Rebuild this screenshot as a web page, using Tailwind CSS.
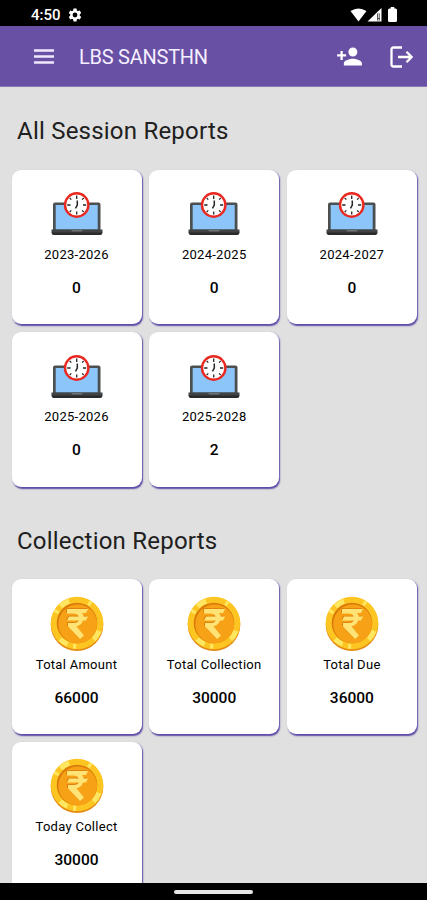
<!DOCTYPE html>
<html lang="en">
<head>
<meta charset="utf-8">
<meta name="viewport" content="width=device-width, initial-scale=1">
<title>LBS SANSTHN</title>
<script src="https://cdn.jsdelivr.net/npm/@tailwindcss/browser@4"></script>
</head>
<body class="bg-black font-[Roboto,sans-serif]">
<svg class="hidden">
  <symbol id="laptop" viewBox="0 0 54 46">
    <rect x="3" y="11.5" width="47.500" height="30" rx="2" fill="#4b4f50"/>
    <rect x="5.700" y="14" width="42" height="24.500" fill="#8cc5fa"/>
    <path d="M1.500 38.500H52.500V41Q52.500 44 49.500 44H4.500Q1.500 44 1.500 41Z" fill="#414345"/>
    <path d="M1.500 41.500H52.500Q52 44 49.500 44H4.500Q2 44 1.500 41.500Z" fill="#292b2d"/>
    <path d="M21 39H33L31.500 40.500H22.500Z" fill="#707375"/>
    <circle cx="26.700" cy="14" r="11.700" fill="#fff" stroke="#e9281f" stroke-width="2.400"/>
    <g stroke="#252525" stroke-width="1.300">
      <path d="M26.700 4.500V8M26.700 20.500V23.500M17.200 14H20.500M33 14H36.200"/>
      <path stroke-width="1.200" d="M19.700 7L21.300 8.600M32.100 19.400L33.700 21M19.700 21L21.300 19.400M32.100 8.600L33.700 7"/>
      <path stroke-width="1.500" fill="none" d="M27.300 9.500V14L25.500 17.300"/>
    </g>
  </symbol>
  <symbol id="coin" viewBox="0 0 54 56">
    <circle cx="27" cy="28.700" r="26.300" fill="#e58a13"/>
    <circle cx="27" cy="27" r="26.300" fill="#fcc521"/>
    <circle cx="27" cy="27" r="23.300" fill="none" stroke="#ffe762" stroke-width="5" stroke-dasharray="10 19 3 6 9 28 3 5 10 20 3 30.400" transform="rotate(20 27 27)"/>
    <circle cx="27" cy="27" r="20.300" fill="#d97a0b"/>
    <circle cx="27.700" cy="28" r="19.400" fill="#f6a116"/>
    <path d="M17 13H38L36 17H32Q33.500 18.500 33.700 20.500H38L36 24.500H33Q31.700 29 26.500 30.300L34 39.500L30 43L18 30.500V27H23.500Q27.500 27 28.700 24.500H17L19 20.500H28.700Q27.500 17.500 23.500 17.500H17Z" fill="#d97a0b" transform="translate(-.8 -.8)"/>
    <path d="M17 13H38L36 17H32Q33.500 18.500 33.700 20.500H38L36 24.500H33Q31.700 29 26.500 30.300L34 39.500L30 43L18 30.500V27H23.500Q27.500 27 28.700 24.500H17L19 20.500H28.700Q27.500 17.500 23.500 17.500H17Z" fill="#ffe475"/>
  </symbol>
</svg>

<div class="flex h-[900px] w-[427px] flex-col overflow-hidden">
  <div class="flex h-[26px] shrink-0 items-center bg-black pl-[31px] pr-[29px] pt-[3px] text-white">
    <span class="pt-px text-[15px] font-medium leading-none">4:50</span>
    <svg class="ml-[6px] size-[16px]" viewBox="0 0 24 24" fill="currentColor"><path d="M19.140 12.940c.040-.300.060-.610.060-.940 0-.320-.020-.640-.070-.940l2.030-1.580c.180-.140.230-.410.120-.610l-1.920-3.320c-.120-.220-.370-.290-.590-.220l-2.390.960c-.500-.380-1.030-.700-1.620-.940L14.400 2.810c-.040-.240-.240-.410-.480-.410h-3.840c-.240 0-.430.170-.470.410L9.250 5.350c-.590.240-1.130.570-1.620.940L5.240 5.330c-.220-.080-.470 0-.590.220L2.740 8.870c-.120.210-.080.470.120.610l2.030 1.580c-.050.300-.090.630-.090.940s.020.640.070.940l-2.030 1.580c-.180.140-.230.410-.120.610l1.920 3.320c.120.220.370.290.590.220l2.390-.960c.500.380 1.030.700 1.620.940l.360 2.540c.050.240.240.410.480.410h3.840c.240 0 .440-.170.470-.410l.360-2.540c.590-.240 1.130-.560 1.620-.940l2.390.960c.220.080.470 0 .590-.220l1.920-3.320c.120-.220.070-.470-.120-.610zM12 15.600a3.600 3.600 0 1 1 0-7.200 3.600 3.600 0 0 1 0 7.200z"/></svg>
    <svg class="ml-auto h-[14px] w-[17px]" viewBox="0 0 17 14" fill="currentColor"><path d="M.500 3Q8.500-2 16.500 3L8.500 13.500Z"/></svg>
    <svg class="h-[14px] w-[15px]" viewBox="0 0 15 14"><path d="M.500 13.500L14.500 0V13.500Z" fill="#fff"/><path d="M10 5.500H13V12.500H10Z" fill="#555"/><path d="M11.200 5.500H12.300V10H11.200ZM11.200 11H12.300V12.500H11.200Z" fill="#eee"/></svg>
    <svg class="ml-[6px] mr-px h-[15px] w-[9px]" viewBox="0 0 10 15" preserveAspectRatio="none" fill="currentColor"><path d="M3 0H7V1.500H8.500Q10 1.500 10 3V13.500Q10 15 8.500 15H1.500Q0 15 0 13.500V3Q0 1.500 1.500 1.500H3Z"/></svg>
  </div>

  <header class="flex h-[61px] shrink-0 items-center border-b border-[#8776b8] bg-[#6850a4] pl-[34px] pr-[14px] pt-px text-white">
    <svg class="h-[15px] w-[20px]" viewBox="0 0 20 15" stroke="#f0e9fc" stroke-width="2.300"><path d="M0 1.500H20M0 7.500H20M0 13.500H20"/></svg>
    <h1 class="ml-[25px] text-[20px] tracking-[-0.250px] text-[#f5efff]">LBS SANSTHN</h1>
    <svg class="ml-auto size-[27px]" viewBox="0 0 24 24" fill="currentColor"><path d="M15 12c2.210 0 4-1.790 4-4s-1.790-4-4-4-4 1.790-4 4 1.790 4 4 4zm-9-2V7H4v3H1v2h3v3h2v-3h3v-2H6zm9 4c-2.670 0-8 1.340-8 4v2h16v-2c0-2.660-5.330-4-8-4z"/></svg>
    <svg class="ml-[27px] h-[22px] w-[23px]" viewBox="0 0 23 22" fill="none" stroke="currentColor" stroke-width="2.300"><path d="M12 1.500H3.500Q1.500 1.500 1.500 3.500V18.500Q1.500 20.500 3.500 20.500H12"/><path d="M8 11H21.500M16.500 5.700L21.700 11L16.500 16.300"/></svg>
  </header>

  <main class="h-[796px] shrink-0 overflow-hidden bg-[#e0e0e0] pl-[11.500px] text-black">
    <h2 class="pl-[5.500px] pt-[29px] text-[24px] leading-[30px] tracking-[0.220px] text-[#202020]">All Session Reports</h2>
    <div class="mt-[23.500px] grid grid-cols-[repeat(3,130px)] gap-x-[7.700px] gap-y-[8px] text-center">
      <div class="flex h-[154.500px] flex-col items-center rounded-[9px] bg-white pt-[21.500px] shadow-[1px_1.500px_1.500px_#5d4aa6]"><svg class="h-[46px] w-[54px]"><use href="#laptop"/></svg><p class="mt-[9px] text-[13px] leading-[18px] tracking-[0.280px]">2023-2026</p><p class="mt-[13px] text-[15.500px] leading-[22px] font-medium">0</p></div>
      <div class="flex h-[154.500px] flex-col items-center rounded-[9px] bg-white pt-[21.500px] shadow-[1px_1.500px_1.500px_#5d4aa6]"><svg class="h-[46px] w-[54px]"><use href="#laptop"/></svg><p class="mt-[9px] text-[13px] leading-[18px] tracking-[0.280px]">2024-2025</p><p class="mt-[13px] text-[15.500px] leading-[22px] font-medium">0</p></div>
      <div class="flex h-[154.500px] flex-col items-center rounded-[9px] bg-white pt-[21.500px] shadow-[1px_1.500px_1.500px_#5d4aa6]"><svg class="h-[46px] w-[54px]"><use href="#laptop"/></svg><p class="mt-[9px] text-[13px] leading-[18px] tracking-[0.280px]">2024-2027</p><p class="mt-[13px] text-[15.500px] leading-[22px] font-medium">0</p></div>
      <div class="flex h-[154.500px] flex-col items-center rounded-[9px] bg-white pt-[21.500px] shadow-[1px_1.500px_1.500px_#5d4aa6]"><svg class="h-[46px] w-[54px]"><use href="#laptop"/></svg><p class="mt-[8px] text-[13px] leading-[18px] tracking-[0.280px]">2025-2026</p><p class="mt-[13px] text-[15.500px] leading-[22px] font-medium">0</p></div>
      <div class="flex h-[154.500px] flex-col items-center rounded-[9px] bg-white pt-[21.500px] shadow-[1px_1.500px_1.500px_#5d4aa6]"><svg class="h-[46px] w-[54px]"><use href="#laptop"/></svg><p class="mt-[8px] text-[13px] leading-[18px] tracking-[0.280px]">2025-2028</p><p class="mt-[13px] text-[15.500px] leading-[22px] font-medium">2</p></div>
    </div>
    <h2 class="pl-[5.500px] pt-[39.500px] text-[24px] leading-[30px] tracking-[0.220px] text-[#202020]">Collection Reports</h2>
    <div class="mt-[23px] grid grid-cols-[repeat(3,130px)] gap-x-[7.700px] gap-y-[8px] text-center">
      <div class="flex h-[154.500px] flex-col items-center rounded-[9px] bg-white pt-[16.500px] shadow-[1px_1.500px_1.500px_#5d4aa6]"><svg class="h-[56px] w-[54px]"><use href="#coin"/></svg><p class="mt-[4px] text-[13px] leading-[18px] tracking-[0.280px]">Total Amount</p><p class="mt-[13px] text-[15.500px] leading-[22px] font-medium">66000</p></div>
      <div class="flex h-[154.500px] flex-col items-center rounded-[9px] bg-white pt-[16.500px] shadow-[1px_1.500px_1.500px_#5d4aa6]"><svg class="h-[56px] w-[54px]"><use href="#coin"/></svg><p class="mt-[4px] text-[13px] leading-[18px] tracking-[0.280px]">Total Collection</p><p class="mt-[13px] text-[15.500px] leading-[22px] font-medium">30000</p></div>
      <div class="flex h-[154.500px] flex-col items-center rounded-[9px] bg-white pt-[16.500px] shadow-[1px_1.500px_1.500px_#5d4aa6]"><svg class="h-[56px] w-[54px]"><use href="#coin"/></svg><p class="mt-[4px] text-[13px] leading-[18px] tracking-[0.280px]">Total Due</p><p class="mt-[13px] text-[15.500px] leading-[22px] font-medium">36000</p></div>
      <div class="flex h-[154.500px] flex-col items-center rounded-[9px] bg-white pt-[16.500px] shadow-[1px_1.500px_1.500px_#5d4aa6]"><svg class="h-[56px] w-[54px]"><use href="#coin"/></svg><p class="mt-[4px] text-[13px] leading-[18px] tracking-[0.280px]">Today Collect</p><p class="mt-[13px] text-[15.500px] leading-[22px] font-medium">30000</p></div>
    </div>
  </main>

  <div class="flex h-[17px] shrink-0 justify-center bg-black pt-[7px]"><div class="h-[4px] w-[79px] rounded-full bg-[#e8e8e8]"></div></div>
</div>
</body>
</html>
